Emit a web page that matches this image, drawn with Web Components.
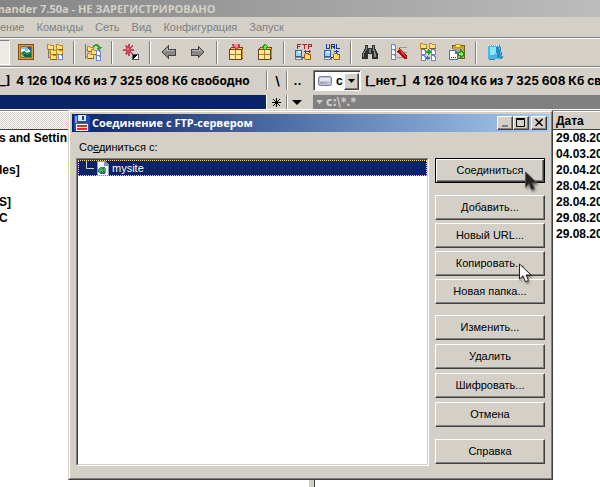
<!DOCTYPE html>
<html lang="ru">
<head>
<meta charset="utf-8">
<title>Соединение с FTP-сервером</title>
<style>
html,body{margin:0;height:100%;overflow:hidden}
body{background:#d4d0c8;color:#000;font:11px/14px "Liberation Sans",sans-serif}
</style>
</head>
<body>
<commander-window></commander-window>
<script>
const define=(name,html,setup)=>{
  const t=document.createElement('template');t.innerHTML=html;
  customElements.define(name,class extends HTMLElement{
    constructor(){super();this.attachShadow({mode:'open'}).append(t.content.cloneNode(true))}
    connectedCallback(){if(setup)setup(this,this.shadowRoot)}
  });
};

/* Icon parts on a 16 px grid */
const folder=(x,y)=>`<path d="M${x} ${y}h3v1h4v5h-7z" fill="#c08a1c"/><path d="M${x+1} ${y+1}h2v1h3v3h-5z" fill="#ffe27c"/><path d="M${x+1} ${y+5}h6v1h-6z" fill="#8a5a10"/>`;
const sheet=(x,y)=>`<path d="M${x} ${y}h3l2 2v4h-5z" fill="#6a84d8"/><path d="M${x+1} ${y+1}h2v1h1v3h-3z" fill="#fff"/>`;
const crate=`<path d="M1 5l2-2h12v11l-1 2H1z" fill="#6b430c"/><path d="M2 6h11v9H2z" fill="#b47a1e"/><path d="M2 6h5v4H2zM8 6h5v4H8zM2 11h5v4H2zM8 11h5v4H8z" fill="#ffe9a0"/><path d="M3 4h11l-1 1H2z" fill="#f0c860"/><path d="M14 5v9" stroke="#c48a28"/>`;
const net=`<path d="M0 6h7v7H0z" fill="#35609c"/><path d="M1 7h5v5H1z" fill="#8cd6ff"/><path d="M3 7h3v2H3z" fill="#e4fbff"/><path d="M0 13h8v3H0z" fill="#777e88"/><path d="M1 14h5v1H1z" fill="#f0f0f0"/><path d="M7 13.500h2" stroke="#333"/><path d="M9 10l1-1h3l1 1h2v5l-1 1h-5l-1-1z" fill="#9a6510"/><path d="M10 10h3v1h2v4h-5z" fill="#ffda68"/>`;
const letters=(c,d)=>`<path transform="translate(0 -1)" d="${d}" fill="none" stroke="${c}"/>`;
const ICONS={
  picture:`<path d="M0 0h16v16H0z" fill="#7b4b12"/><path d="M1 1h14v14H1z" fill="#d69a4a"/><path d="M2 2h12v12H2z" fill="#a66a25"/><path d="M3 3h10v10H3z" fill="#78bdf0"/><path d="M3 5h4v2h3V5h3v3H3z" fill="#e6f6ff"/><path d="M9 3h4v4l-2-1z" fill="#245c9c"/><path d="M3 9l3-2 3 2 4-2v6H3z" fill="#218a54"/><path d="M6 10l4 1 3-2v4H7z" fill="#12603c"/><path d="M3 10l4 3H3z" fill="#98d060"/>`,
  tree:`<path d="M1.500 3v11M2 8h2M2 13h2M9.500 5v8" stroke="#777" fill="none"/>${folder(0,0)}${folder(9,0)}${folder(3,5)}${folder(9,5)}${folder(3,10)}${sheet(11,10)}`,
  sync:`<path d="M.500 0v15M1 5h2M1 12h2" stroke="#777" fill="none"/>${folder(2,2)}${folder(6,5)}${folder(2,9)}${sheet(11,6)}${sheet(11,11)}<path d="M8 1l3-1h2l2 3h2l-3 4-3-3h2l-2-2-3 1z" fill="#26a236"/>`,
  star:`<path d="M5 0h2v3l2-2 1 1-2 3h3v2H8l2 3-1 1-2-2v3H5V9l-2 2-1-1 2-3H0V5h4L2 2l1-1 2 2z" fill="#c2455c"/><path d="M3 3h5v5H3z" fill="#c2455c"/><path d="M4 4h2v2H4z" fill="#df7888"/><path d="M9 10h7v6H9z" fill="#555"/><path d="M10 11h5v4h-5z" fill="#fff"/><path d="M10 11h4l-4 4z" fill="#000"/>`,
  left:`<path d="M1 8l6-6v3h7v6H7v3z" fill="#888" stroke="#444"/><path d="M3 8l3-3v1h7" stroke="#bbb" fill="none"/>`,
  right:`<path d="M14 8L8 2v3H1v6h7v3z" fill="#888" stroke="#444"/><path d="M2 6h7V5l3 3" stroke="#bbb" fill="none"/>`,
  pack:`${crate}<path d="M4 0h8v2l-4 4-4-4z" fill="#d03c50"/><path d="M6 0h4v2L8 4 6 2z" fill="#ff8c96"/>`,
  unpack:`${crate}<path d="M8 0l5 4h-3v2H6V4H3z" fill="#279b18"/><path d="M8 1l2 2H9v2H7V3H6z" fill="#76e446"/>`,
  ftp:`${net}<path d="M9 7.500h7M10.500 6v3M14.500 6v3" stroke="#a82030"/>${letters('#a0282c','M2.500 6V1.500H6M3 3.500h2M7 1.500h5M9.500 1v5M13.500 6V1.500H16.500v2H14')}`,
  url:`${net}<path d="M10 7.500h5M12.500 6v3" stroke="#1838a0"/>${letters('#1838a0','M2.500 1v4.500h3V1M7.500 6V1.500H10.500v2H8M9.500 3.500v1h1V6M12.500 1v4.500H16')}`,
  find:`<path d="M3 1h3v3h4V1h3v3l3 6v5h-6v-5H6v5H0v-5l3-6z" fill="#303230"/><path d="M4 2h1v3l-3 5v3H1v-3l3-5zM11 2h1v3l2 5v3h-2v-4l-1-4z" fill="#868a88"/><path d="M7 5h2v4H7z" fill="#777"/>`,
  rename:`<path d="M6 3.500h10M6 8.500h10M6 13.500h10" stroke="#999"/>${sheet(0,0)}${sheet(0,5)}${sheet(0,10)}<path d="M5 3h3l8 9v3h-3L6 7z" fill="#a80c10"/><path d="M8 5l7 8" stroke="#ff4a3e"/><path d="M5 3h3v2L6 7z" fill="#f2c080"/>`,
  swap:`${folder(0,-1)}${folder(9,-1)}${sheet(1,5)}${sheet(11,5)}${sheet(1,11)}${sheet(11,11)}<path d="M6 7h2V5l3 3-3 3V9H6z" fill="#209a28"/><path d="M10 13H8v-2l-3 3 3 2v-1h2z" fill="#2879c8"/>`,
  clip:`<path d="M3 1h13v14H5z" fill="#785a26"/><path d="M4 2h11v12H4z" fill="#bda36e"/><path d="M6 0h6v2h2v2H5V2h1z" fill="#c69c16"/><path d="M7 1h4v2H7z" fill="#ffe45c"/><path d="M0 6h6l3 3v7H0z" fill="#526dc0"/><path d="M1 7h5v3h2v5H1z" fill="#fff"/><path d="M2 13h1v1H2zM4 13h1v1H4zM6 13h1v1H6z" fill="#224"/><path d="M9 8h2V5l5 5-5 5v-3H9z" fill="#229220"/><path d="M10 9h2V8l2 2-2 2v-1h-2z" fill="#9aec60"/>`,
  notes:`<path d="M2 1h11l3 13-2 1-12 1z" fill="#567a88"/><path d="M1 1h11l3 12-3 2H1z" fill="#4bb6e6"/><path d="M3 3h7l1 7-8 1z" fill="#8be4fb"/><path d="M9 3h3l2 10-4 1z" fill="#238ac8"/><path d="M1 1h1v1H1zM3 1h1v1H3zM5 1h1v1H5zM7 1h1v1H7zM9 1h1v1H9zM11 1h1v1h-1z" fill="#fff"/>`,
  disk:`<path d="M0 0h14l2 2v14H0z" fill="#1c4cb8"/><path d="M1 1h2v7H1z" fill="#6aa4ff"/><path d="M4 0h8v6H4z" fill="#dfe8f5"/><path d="M8 1h2v4H8z" fill="#1c3c88"/><path d="M2 8h12v8H2z" fill="#fff"/><path d="M2 8h12v1H2zM3 10h10v2H3zM3 13h10v2H3z" fill="#e02830"/>`,
  page:`<path d="M2 1h8l4 4v11H2z" fill="#8795b8"/><path d="M3 2h6v4h4v9H3z" fill="#f4f8ff"/><path d="M5 7h4l2 2v3l-2 2H5l-2-2V9z" fill="#2864b4"/><path d="M5 7h2v2l2 1-1 2-2-1v2l-2-1zM9 8h2v4l-1 1z" fill="#45b438"/>`
};
customElements.define('pixel-icon',class extends HTMLElement{
  connectedCallback(){
    const r=this.shadowRoot||this.attachShadow({mode:'open'});
    r.innerHTML=`<style>:host{display:block;width:16px;height:16px;flex:none}svg{display:block;overflow:visible}</style><svg width="16" height="16" viewBox="0 0 16 16" shape-rendering="crispEdges" aria-hidden="true">${ICONS[this.getAttribute('name')]||''}</svg>`;
  }
});

define('tool-button',`<style>
:host{display:block;width:29px;flex:none}
button{display:block;width:100%;height:26px;border:0;padding:4px 6px 6px 7px;background:none}
</style><button type="button"><pixel-icon></pixel-icon></button>`,(el,r)=>{
  r.querySelector('pixel-icon').setAttribute('name',el.getAttribute('icon'));
  r.querySelector('button').setAttribute('aria-label',el.getAttribute('label'));
  r.querySelector('pixel-icon').connectedCallback();
});
define('tool-gap',`<style>:host{display:block;flex:none;width:2px;margin:1px 3px 2px 4px;box-sizing:border-box;border-left:1px solid #808080;border-right:1px solid #fff}</style>`);

define('tool-bar',`<style>
:host{display:flex;border-top:1px solid #fff;border-bottom:1px solid #808080;padding:1px 0 0;overflow:hidden}
.on{box-sizing:border-box;width:10px;flex:none;margin:0 1px 1px 0;padding:0;border:solid #fff;border-width:0 1px 1px 0;border-top:1px solid #808080;background:#eceae5}
</style><button class="on" type="button" aria-label="Подробно" aria-pressed="true"></button>
<tool-button icon="picture" label="Просмотр эскизов"></tool-button><tool-button icon="tree" label="Дерево каталогов"></tool-button><tool-gap></tool-gap>
<tool-button icon="sync" label="Без подкаталогов"></tool-button><tool-gap></tool-gap>
<tool-button icon="star" label="Инвертировать"></tool-button><tool-gap></tool-gap>
<tool-button icon="left" label="Назад"></tool-button><tool-button icon="right" label="Вперёд"></tool-button><tool-gap></tool-gap>
<tool-button icon="pack" label="Упаковать"></tool-button><tool-button icon="unpack" label="Распаковать"></tool-button><tool-gap></tool-gap>
<tool-button icon="ftp" label="FTP"></tool-button><tool-button icon="url" label="URL"></tool-button><tool-gap></tool-gap>
<tool-button icon="find" label="Поиск"></tool-button><tool-button icon="rename" label="Переименовать"></tool-button><tool-button icon="swap" label="Синхронизировать"></tool-button><tool-button icon="clip" label="Копировать"></tool-button><tool-gap></tool-gap>
<tool-button icon="notes" label="Блокнот"></tool-button>`);

define('menu-bar',`<style>
:host{display:flex;gap:12px;height:20px;align-items:center;border-bottom:1px solid #808080;overflow:hidden;white-space:nowrap}
button{flex:none;border:0;padding:0;margin:0;background:none;color:#808080;font:inherit}
</style><button type="button">ение</button><button type="button">Команды</button><button type="button">Сеть</button><button type="button">Вид</button><button type="button">Конфигурация</button><button type="button">Запуск</button>`);

define('drive-bar',`<style>
:host{display:flex;box-sizing:border-box;height:28px;align-items:center;border-top:1px solid #fff;padding-bottom:2px;overflow:hidden;white-space:pre;font:bold 12px/16px Inter,"Liberation Sans",sans-serif}
.free{width:266px;flex:none}
button{box-sizing:border-box;width:20px;height:19px;flex:none;border:0;border-left:1px solid #808080;box-shadow:inset 1px 0 #fff;padding:0 0 0 2px;background:none;font:inherit}
.drive{box-sizing:border-box;display:flex;align-items:center;flex:none;width:48px;height:21px;margin:0 4px 0 7px;border:1px solid;border-color:#808080 #fff #fff #808080;box-shadow:inset 1px 1px #404040;background:#fff;padding:2px 1px 1px 4px;font-weight:400}
select{appearance:none;border:0;padding:0 0 0 4px;background:none;font:bold 12px/16px "Liberation Sans",sans-serif;width:25px;flex:1;min-width:0;color:#000}
.arrow{box-sizing:border-box;width:15px;height:17px;flex:none;border:1px solid;border-color:#fff #404040 #404040 #fff;box-shadow:inset -1px -1px #808080;background:#d4d0c8;display:grid;place-items:center;pointer-events:none}
</style><div class="free">_]  4 126 104 Кб из 7 325 608 Кб свободно</div>
<button type="button">\\</button><button type="button">..</button>
<label class="drive"><svg width="14" height="10" viewBox="0 0 14 10" aria-hidden="true"><rect x=".5" y=".5" width="13" height="9" rx="2" fill="#bfc3d4" stroke="#777b90"/><path d="M2 2h10v3H2z" fill="#e2e5ef"/><path d="M2 7h7" stroke="#9297aa"/><path d="M3 6h1v1H3z" fill="#20b020"/></svg><select aria-label="Диск"><option>c</option></select><span class="arrow"><svg width="7" height="4" viewBox="0 0 7 4" aria-hidden="true"><path d="M0 0h7L3.500 4z"/></svg></span></label>
<span>[_нет_]  4 126 104 Кб из 7 325 608 Кб свободно</span>`,(el,r)=>{
  for(const n of [...r.childNodes])if(n.nodeType===3)n.remove();
});

define('path-bar',`<style>
:host{display:flex;height:14px;border-bottom:1px solid #fff;overflow:hidden}
.left{width:266px;flex:none;background:#0a246a;box-shadow:1px 0 #fff}
button{box-sizing:border-box;width:20px;border:0;padding:0;background:none;display:grid;place-items:center}
.down{border-left:1px solid #808080;box-shadow:inset 1px 0 #fff}
.right{flex:1;margin-left:7px;background:#808080;color:#d4d0c8;display:flex;align-items:center;gap:3px;padding-left:3px;font:bold 12px/14px "DejaVu Sans Condensed",sans-serif}
</style><div class="left"></div><button type="button" aria-label="Избранное"><svg width="9" height="9" viewBox="0 0 9 9"><path d="M4.500 0v9M0 4.500h9M1 1l7 7M8 1L1 8" stroke="#000"/></svg></button><button class="down" type="button" aria-label="История"><svg width="10" height="5" viewBox="0 0 10 5"><path d="M0 0h10L5 5z"/></svg></button>
<div class="right"><svg width="7" height="4" viewBox="0 0 7 4" aria-hidden="true"><path d="M0 0h7L3.500 4z" fill="#d4d0c8"/></svg><span>c:\\*.*</span></div>`);

define('file-table',`<style>
:host{display:block;background:#fff;overflow:hidden;border-top:1px solid #808080;font:bold 12px/16px "Liberation Sans",sans-serif}
table{border-collapse:separate;border-spacing:0;width:100%}
th,td{padding:0;text-align:left;white-space:pre;height:16px}
th{height:17px;border-bottom:1px solid #404040;border-top:1px solid #fff;background:var(--head,#d4d0c8)}
th,td{padding-left:var(--inset,0)}
</style><table><thead><tr><th></th></tr></thead><tbody></tbody></table>`,(el,r)=>{
  r.querySelector('th').textContent=el.getAttribute('head')||'';
  r.querySelector('tbody').innerHTML=el.getAttribute('rows').split('|').map(t=>`<tr><td>${t}</td></tr>`).join('');
});

define('push-button',`<style>
:host{display:block}
button{box-sizing:border-box;width:100%;height:25px;border:1px solid;border-color:#fff #404040 #404040 #fff;box-shadow:inset -1px -1px #808080;background:#d4d0c8;color:#000;font:inherit;padding:0 0 1px}
:host([default]) button{border-color:#000;box-shadow:inset 1px 1px #fff,inset -1px -1px #404040,inset -2px -2px #808080}
</style><button type="button"><slot></slot></button>`);

define('caption-button',`<style>
:host{display:block}
button{box-sizing:border-box;display:grid;place-items:center;width:16px;height:14px;border:1px solid;border-color:#fff #404040 #404040 #fff;box-shadow:inset -1px -1px #808080;background:#d4d0c8;padding:0 1px 1px 0}
</style><button type="button"><svg width="10" height="9" viewBox="0 0 10 9" fill="none" stroke="#000"></svg></button>`,(el,r)=>{
  const k=el.getAttribute('kind');
  r.querySelector('svg').innerHTML={min:'<path d="M2 8h6" stroke="#808080" stroke-width="2"/>',max:'<path d="M.500 1.500h8v7h-8zM0 .500h9"/>',close:'<path d="M1.500 1l7 7M8.500 1l-7 7" stroke-width="1.500"/>'}[k];
  r.querySelector('button').setAttribute('aria-label',{min:'Свернуть',max:'Развернуть',close:'Закрыть'}[k]);
});

define('site-list',`<style>
:host{display:block;box-sizing:border-box;border:1px solid;border-color:#808080 #fff #fff #808080;background:#fff}
.in{box-sizing:border-box;height:100%;border:1px solid;border-color:#404040 #d4d0c8 #d4d0c8 #404040}
.item{box-sizing:border-box;height:16px;display:flex;align-items:center;background:#0a246a;color:#fff;outline:1px dotted #ffd98c;outline-offset:-1px;padding-left:8px}
pixel-icon{margin-right:1px}
</style><div class="in" role="tree" aria-label="Соединиться с"><div class="item" role="treeitem" tabindex="0" aria-selected="true"><svg width="9" height="16" viewBox="0 0 9 16" aria-hidden="true"><path d="M.500 1v7.500H8" fill="none" stroke="#d4d0c8"/></svg><pixel-icon name="page"></pixel-icon><span>mysite</span></div></div>`);

define('ftp-dialog',`<style>
:host{display:block;border:1px solid;border-color:#d4d0c8 #404040 #404040 #d4d0c8;background:#d4d0c8}
.frame{border:1px solid;border-color:#fff #808080 #808080 #fff;padding:2px}
header{display:flex;align-items:center;height:18px;padding:0 2px;background:linear-gradient(90deg,#0a246a,#a6caf0);color:#fff;font:bold 11px/14px "Open Sans","DejaVu Sans Condensed",sans-serif}
h1{font:inherit;margin:0 auto 0 2px}
.close{margin-left:2px}
main{display:grid;grid-template-columns:1fr 110px;column-gap:6px;padding:8px 4px 10px}
.label{grid-column:1/3;padding:0 0 4px 3px;line-height:14px}
.keys{display:grid;gap:4px;padding-bottom:2px}
.keys div{display:grid;gap:3px}
.keys .first{margin-bottom:8px}
.keys .edit{margin-bottom:7px}
.keys .close-group{margin-bottom:8px;gap:4px}
</style><div class="frame"><header><pixel-icon name="disk"></pixel-icon><h1>Соединение с FTP-сервером</h1><caption-button kind="min"></caption-button><caption-button kind="max"></caption-button><caption-button class="close" kind="close"></caption-button></header>
<main><div class="label">Со<u>е</u>диниться с:</div><site-list></site-list>
<div class="keys"><div class="first"><push-button default>Соединиться</push-button></div>
<div class="edit"><push-button>Добавить...</push-button><push-button>Новый URL...</push-button><push-button>Копировать...</push-button><push-button>Новая папка...</push-button></div>
<div class="close-group"><push-button>Изменить...</push-button><push-button>Удалить</push-button><push-button>Шифровать...</push-button><push-button>Отмена</push-button></div>
<div><push-button>Справка</push-button></div></div></main></div>`);

define('mouse-pointer',`<style>:host{display:block;pointer-events:none;filter:drop-shadow(1px 2px 1px #0006)}svg{display:block}</style><svg width="13" height="20" viewBox="0 0 13 20" aria-hidden="true"><path d="M.500 1v15l3.500-3.300 2.500 6 3-1.300-2.500-5.400h5z" fill="var(--fill)" stroke="var(--edge)"/></svg>`);

define('commander-window',`<style>
:host{display:flex;flex-direction:column;height:100%;position:relative;overflow:hidden}
.title{height:17px;flex:none;background:linear-gradient(90deg,#858585,#bcbcbc);color:#d4d0c8;font:bold 11px/17px "Open Sans",sans-serif;white-space:nowrap;display:flex}
.title span{margin-left:-6px}
.panes{flex:1;min-height:0;display:grid;grid-template-columns:308px 1fr}
.left{--head:repeating-conic-gradient(#d4d0c8 0 25%,#fff 0 50%) 0 0/2px 2px;overflow:hidden}
.right{display:flex}
.split{width:5px;flex:none;background:#d4d0c8;border-left:1px solid #fff;border-right:1px solid #404040}
.right file-table{flex:1;--inset:241px}
.left file-table{height:100%;margin-left:-1px}
ftp-dialog{position:absolute;left:68px;right:47px;top:110px}
.dark,.light{position:absolute}
.dark{left:525px;top:171px;--fill:#222;--edge:#555}
.light{left:519px;top:263px;--fill:#fff;--edge:#222}
</style>
<div class="title"><span>mander 7.50a - НЕ ЗАРЕГИСТРИРОВАНО</span></div>
<menu-bar></menu-bar><tool-bar></tool-bar><drive-bar></drive-bar><path-bar></path-bar>
<div class="panes"><div class="left"><file-table rows="s and Settin||les]||S]|C"></file-table></div>
<div class="right"><div class="split"></div><file-table head="Дата" rows="29.08.20|04.03.20|20.04.20|28.04.20|28.04.20|29.08.20|29.08.20"></file-table></div></div>
<ftp-dialog></ftp-dialog><mouse-pointer class="dark"></mouse-pointer><mouse-pointer class="light"></mouse-pointer>`);
</script>
</body>
</html>
